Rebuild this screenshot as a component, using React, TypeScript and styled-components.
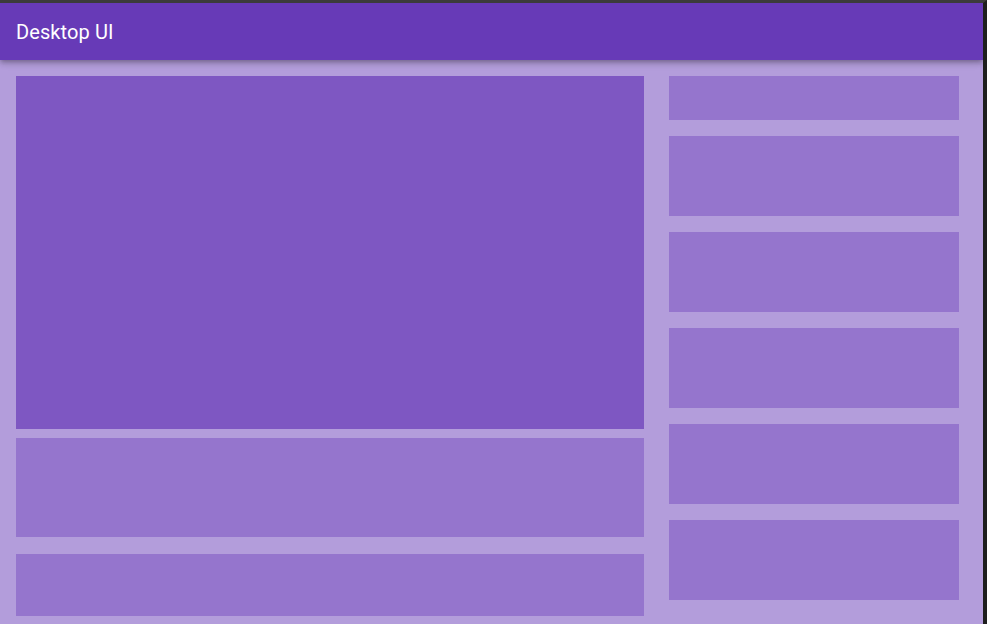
import React from "react";
import styled, { createGlobalStyle } from "styled-components";

const Global = createGlobalStyle`
  html, body {
    margin: 0;
    padding: 0;
    background: #1f1f1f;
    overflow: hidden;
  }
  * { box-sizing: border-box; }
`;

const Frame = styled.div`
  width: 987px;
  height: 624px;
  border-top: 3px solid #3b3b3b;
  border-right: 4px solid #1e1e1e;
  display: flex;
  flex-direction: column;
  background: #b39ddb;
  overflow: hidden;
`;

const AppBar = styled.header`
  height: 57px;
  flex: none;
  background: #673ab7;
  display: flex;
  align-items: center;
  padding: 0 16px;
  box-shadow: 0 2px 4px -1px rgba(0, 0, 0, 0.2), 0 4px 5px 0 rgba(0, 0, 0, 0.14),
    0 1px 10px 0 rgba(0, 0, 0, 0.12);
  position: relative;
  z-index: 1;
`;

const Title = styled.h1`
  margin: 0;
  color: #ffffff;
  font-family: Roboto, "Liberation Sans", sans-serif;
  font-size: 20px;
  font-weight: 400;
  letter-spacing: 0.1px;
`;

const Content = styled.main`
  flex: 1;
  display: grid;
  grid-template-columns: 628px 290px;
  column-gap: 25px;
  padding: 16px 24px 0 16px;
  align-items: start;
`;

const Column = styled.div`
  display: flex;
  flex-direction: column;
`;

const Panel = styled.div<{ $h: number; $mt?: number; $dark?: boolean }>`
  height: ${(p) => p.$h}px;
  margin-top: ${(p) => p.$mt ?? 0}px;
  background: ${(p) => (p.$dark ? "#7e57c2" : "#9575cd")};
`;

const rightPanels = [44, 80, 80, 80, 80, 80];

export default function App() {
  return (
    <>
      <Global />
      <Frame>
        <AppBar>
          <Title>Desktop UI</Title>
        </AppBar>
        <Content>
          <Column>
            <Panel $h={353} $dark />
            <Panel $h={99} $mt={9} />
            <Panel $h={62} $mt={17} />
          </Column>
          <Column>
            {rightPanels.map((h, i) => (
              <Panel key={i} $h={h} $mt={i === 0 ? 0 : 16} />
            ))}
          </Column>
        </Content>
      </Frame>
    </>
  );
}
